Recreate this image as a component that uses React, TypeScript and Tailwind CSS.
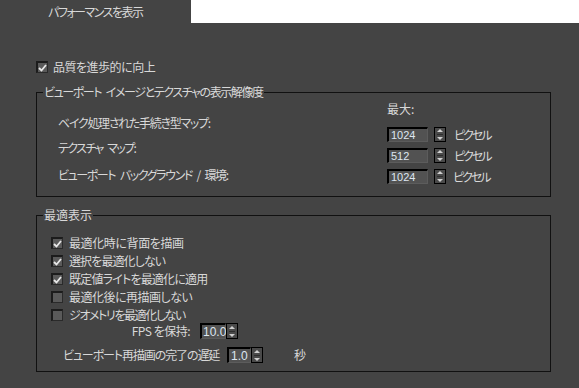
import React from "react";

const Check = ({ checked }: { checked: boolean }) => (
  <div className="w-[12px] h-[12px] border-t-2 border-l-2 border-b border-r border-t-[#1c1c1c] border-l-[#1c1c1c] border-b-[#2a2a2a] border-r-[#2a2a2a] bg-[#5a5a5a] flex items-center justify-center shrink-0">
    {checked && (
      <svg width="9" height="8" viewBox="0 0 9 8">
        <path d="M1 4 L3.5 6.5 L8 1" stroke="#e8e8e8" strokeWidth="1.8" fill="none" />
      </svg>
    )}
  </div>
);

const Spinner = ({ className = "" }: { className?: string }) => (
  <div className={`w-[12px] shrink-0 border border-black bg-[#4a4a4a] flex flex-col items-center justify-center gap-[2px] ${className}`}>
    <svg width="6" height="3" viewBox="0 0 6 3">
      <path d="M0 3 L3 0 L6 3 Z" fill="#d0d0d0" />
    </svg>
    <div className="w-[6px] h-px bg-[#2e2e2e]" />
    <svg width="6" height="3" viewBox="0 0 6 3">
      <path d="M0 0 L6 0 L3 3 Z" fill="#d0d0d0" />
    </svg>
  </div>
);

const NumBox = ({ value, className = "" }: { value: string; className?: string }) => (
  <div
    className={`shrink-0 border-t-2 border-l-2 border-black border-b border-r border-b-[#5c5c5c] border-r-[#5c5c5c] bg-[#525252] text-[#dde6f0] flex items-center leading-none font-['Liberation_Sans',sans-serif] ${className}`}
  >
    {value}
  </div>
);

const ResRow = ({ value, textMl = "ml-[8px]" }: { value: string; textMl?: string }) => (
  <div className="flex items-center h-[15px]">
    <NumBox value={value} className="w-[41px] h-[15px] text-[11px] pl-[2px]" />
    <Spinner className="ml-[6px] h-[15px]" />
    <span className={`${textMl} tracking-[-2px]`}>ピクセル</span>
  </div>
);

const OptRow = ({ checked, label, track }: { checked: boolean; label: string; track: string }) => (
  <div className="flex items-center h-[18px] pl-[14px]">
    <Check checked={checked} />
    <span className={`ml-[6px] whitespace-nowrap ${track}`}>{label}</span>
  </div>
);

export default function App() {
  return (
    <div className="w-[579px] h-[388px] bg-[#444444] text-[#d8d8d8] text-[12px] leading-[16px] font-['Noto_Sans_CJK_JP','Noto_Sans',sans-serif] [font-feature-settings:'palt'] overflow-hidden">
      <div className="flex h-[23px]">
        <div className="w-[191px] pl-[48px] flex items-center tracking-[-1.5px]">パフォーマンスを表示</div>
        <div className="flex-1 bg-white" />
      </div>

      <div className="flex items-center h-[16px] mt-[36px] pl-[36px]">
        <Check checked />
        <span className="ml-[5px] tracking-[-0.5px]">品質を進歩的に向上</span>
      </div>

      <fieldset className="ml-[36px] mt-[9px] w-[515px] h-[113px] border border-[#111111]">
        <legend className="ml-[6px] px-[1px] leading-[16px] tracking-[-1.4px]">ビューポート{"\u2002"}イメージとテクスチャの表示解像度</legend>
        <div className="flex">
          <div className="w-[350px] pl-[21px] pt-[15px] flex flex-col whitespace-nowrap">
            <span className="tracking-[-1.3px]">ベイク処理された手続き型マップ:</span>
            <span className="mt-[9px] tracking-[-1.6px]">テクスチャ{"\u2002"}マップ:</span>
            <span className="mt-[11px] tracking-[-1.4px]">ビューポート{"\u2002"}バックグラウンド{"\u2002"}/{"\u2002"}環境:</span>
          </div>
          <div className="flex flex-col pt-[1px]">
            <span>最大:</span>
            <div className="mt-[10px] flex flex-col gap-[6px]">
              <ResRow value="1024" />
              <ResRow value="512" />
              <ResRow value="1024" textMl="ml-[7px]" />
            </div>
          </div>
        </div>
      </fieldset>

      <fieldset className="ml-[36px] mt-[10px] w-[515px] h-[165px] border border-[#111111]">
        <legend className="ml-[6px] px-[1px] leading-[16px]">最適表示</legend>
        <div className="pt-[11px] flex flex-col">
          <OptRow checked label="最適化時に背面を描画" track="tracking-[-0.4px]" />
          <OptRow checked label="選択を最適化しない" track="tracking-[-0.9px]" />
          <OptRow checked label="既定値ライトを最適化に適用" track="tracking-[-0.8px]" />
          <OptRow checked={false} label="最適化後に再描画しない" track="tracking-[-0.5px]" />
          <OptRow checked={false} label="ジオメトリを最適化しない" track="tracking-[-1.4px]" />
          <div className="flex items-center h-[16px] -mt-[1px]">
            <span className="w-[153px] text-right whitespace-nowrap tracking-[-0.5px]">FPS を保持:</span>
            <NumBox value="10.0" className="ml-[10px] w-[26px] h-[16px] text-[12px] pl-[1px]" />
            <Spinner className="h-[16px]" />
          </div>
          <div className="flex items-center h-[16px] mt-[8px] pl-[26px]">
            <span className="w-[158px] whitespace-nowrap tracking-[-1.1px]">ビューポート再描画の完了の遅延</span>
            <NumBox value="1.0" className="ml-[6px] w-[24px] h-[16px] text-[12px] pl-[2px]" />
            <Spinner className="h-[16px]" />
            <span className="ml-[31px]">秒</span>
          </div>
        </div>
      </fieldset>
    </div>
  );
}
